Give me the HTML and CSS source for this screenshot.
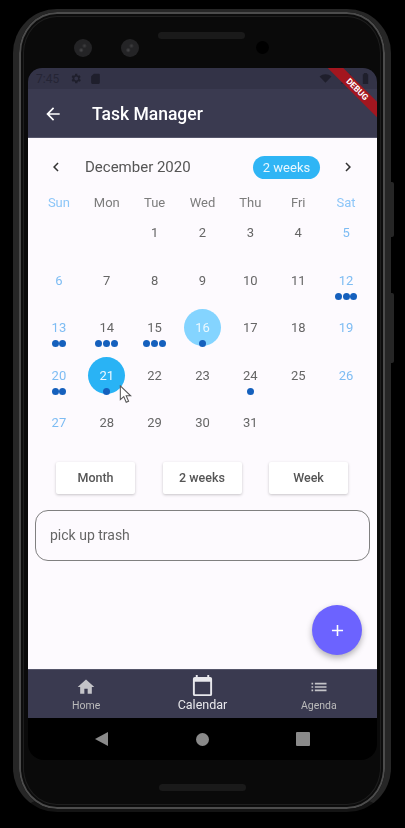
FILE: index.html
```html
<!DOCTYPE html>
<html lang="en">

<head>
    <meta charset="UTF-8">
    <meta name="viewport" content="width=device-width, initial-scale=1.0">
    <title>Task Manager</title>
    <link rel="stylesheet" href="styles.css">
</head>

<body>
    <div class="phone">
        <div class="side-btn side-btn-top"></div>
        <div class="side-btn side-btn-low"></div>

        <div class="bezel-top">
            <div class="sensors">
                <span class="lens"></span>
                <span class="lens"></span>
                <span class="speaker"></span>
                <span class="camera"></span>
            </div>
        </div>

        <div class="screen">
            <div class="status-bar">
                <span class="clock">7:45</span>
                <svg class="status-icon" viewBox="0 0 24 24"><path d="M19.4 13a7.800 7.800 0 0 0 0-2l2.100-1.600-2-3.400-2.500 1a7.500 7.500 0 0 0-1.700-1L15.400 3.300h-4l-.4 2.700a7.500 7.500 0 0 0-1.700 1l-2.500-1-2 3.400L6.900 11a7.800 7.800 0 0 0 0 2l-2.100 1.600 2 3.400 2.500-1a7.500 7.500 0 0 0 1.700 1l.4 2.700h4l.4-2.700a7.500 7.500 0 0 0 1.700-1l2.500 1 2-3.400zM13.400 15.500a3.500 3.500 0 1 1 0-7 3.500 3.500 0 0 1 0 7z"/></svg>
                <svg class="status-icon" viewBox="0 0 24 24"><path d="M9 3h9a2 2 0 0 1 2 2v15a2 2 0 0 1-2 2H6a2 2 0 0 1-2-2V8z"/></svg>
                <span class="status-fill"></span>
                <svg class="status-icon" viewBox="0 0 24 24"><path d="M12 20 1 8.500a16 16 0 0 1 22 0z"/></svg>
                <svg class="status-icon" viewBox="0 0 24 24"><path d="M21 3v18H3z"/></svg>
                <svg class="status-icon" viewBox="0 0 24 24"><path d="M9 2h6v2h2v18H7V4h2z"/></svg>
            </div>

            <header class="app-bar">
                <svg class="back-icon" viewBox="0 0 24 24"><path d="M20 11H7.800l5.600-5.600L12 4l-8 8 8 8 1.400-1.400L7.800 13H20z"/></svg>
                <h1 class="app-title">Task Manager</h1>
            </header>

            <div class="debug-banner"><span>DEBUG</span></div>

            <main class="content">
                <div class="cal-header">
                    <svg class="chevron" viewBox="0 0 24 24"><path d="M15.400 7.400 14 6l-6 6 6 6 1.400-1.400L10.800 12z"/></svg>
                    <span class="cal-title">December 2020</span>
                    <span class="format-pill">2 weeks</span>
                    <svg class="chevron" viewBox="0 0 24 24"><path d="M10 6 8.600 7.400 13.200 12l-4.600 4.600L10 18l6-6z"/></svg>
                </div>

                <div class="week-head">
                    <span class="weekend">Sun</span>
                    <span>Mon</span>
                    <span>Tue</span>
                    <span>Wed</span>
                    <span>Thu</span>
                    <span>Fri</span>
                    <span class="weekend">Sat</span>
                </div>

                <div class="days" id="days"></div>

                <div class="format-buttons">
                    <button class="format-btn">Month</button>
                    <button class="format-btn">2 weeks</button>
                    <button class="format-btn">Week</button>
                </div>

                <div class="task-box">pick up trash</div>

                <button class="fab">
                    <svg viewBox="0 0 24 24"><path d="M19 13h-6v6h-2v-6H5v-2h6V5h2v6h6z"/></svg>
                </button>

                <svg class="cursor" viewBox="0 0 14 22"><path d="M1 1v16l4-3.500 2.800 6.500 2.800-1.200-2.800-6.300H13z"/></svg>
            </main>

            <nav class="bottom-nav">
                <div class="nav-item">
                    <svg class="nav-icon" viewBox="0 0 24 24"><path d="M10 20v-6h4v6h5v-8h3L12 3 2 12h3v8z"/></svg>
                    <span>Home</span>
                </div>
                <div class="nav-item nav-active">
                    <svg class="nav-icon" viewBox="0 0 24 24"><path d="M20 3h-1V1h-2v2H7V1H5v2H4a2 2 0 0 0-2 2v16a2 2 0 0 0 2 2h16a2 2 0 0 0 2-2V5a2 2 0 0 0-2-2zm0 18H4V8h16z"/></svg>
                    <span>Calendar</span>
                </div>
                <div class="nav-item">
                    <svg class="nav-icon" viewBox="0 0 24 24"><path d="M3 13h2v-2H3zm0 4h2v-2H3zm0-8h2V7H3zm4 4h14v-2H7zm0 4h14v-2H7zM7 7v2h14V7z"/></svg>
                    <span>Agenda</span>
                </div>
            </nav>

            <div class="system-nav">
                <span class="sys-back"></span>
                <span class="sys-home"></span>
                <span class="sys-recent"></span>
            </div>
        </div>

        <div class="bezel-bottom"><span class="speaker"></span></div>
    </div>

    <script>
        // day, number of dots, state; empty cells lead the first week
        const MARKERS = { 12: 3, 13: 2, 14: 3, 15: 3, 16: 1, 20: 2, 21: 1, 24: 1 };
        const FIRST_WEEKDAY = 2;
        const LAST_DAY = 31;

        const days = document.getElementById('days');

        for (let i = 0; i < FIRST_WEEKDAY; i++) {
            days.appendChild(document.createElement('div'));
        }

        for (let d = 1; d <= LAST_DAY; d++) {
            const cell = document.createElement('div');
            const weekday = (d + FIRST_WEEKDAY - 1) % 7;
            cell.className = 'day';
            if (weekday === 0 || weekday === 6) cell.classList.add('weekend');
            if (d === 16) cell.classList.add('today');
            if (d === 21) cell.classList.add('selected');

            const num = document.createElement('span');
            num.className = 'num';
            num.innerText = d;
            cell.appendChild(num);

            if (MARKERS[d]) {
                const dots = document.createElement('span');
                dots.className = 'dots';
                for (let k = 0; k < MARKERS[d]; k++) {
                    dots.appendChild(document.createElement('i'));
                }
                cell.appendChild(dots);
            }
            days.appendChild(cell);
        }
    </script>
</body>

</html>
```
FILE: styles.css
```css
* {
    box-sizing: border-box;
}

html,
body {
    margin: 0;
    height: 100%;
    background-color: #000;
    overflow: hidden;
}

body {
    padding: 9px 0 0 13px;
    font-family: Roboto, "Liberation Sans", sans-serif;
}

.phone {
    position: relative;
    display: flex;
    flex-direction: column;
    width: 378px;
    height: 803px;
    padding: 0 8px 0 9px;
    background-color: #0a0a0a;
    border-style: solid;
    border-width: 3px 6px;
    border-color: #262626 #262626 #141414;
    border-radius: 44px;
    box-shadow: inset 0 0 0 2px #4c4c4c, inset 0 0 0 4px #0c0c0c, inset 0 0 0 5px #1e1e1e;
    filter: blur(0.5px);
}

.side-btn {
    position: absolute;
    right: -9px;
    width: 3px;
    background-color: #262626;
    border-radius: 0 2px 2px 0;
}

.side-btn-top {
    top: 170px;
    height: 55px;
}

.side-btn-low {
    top: 281px;
    height: 70px;
}

.bezel-top {
    height: 56px;
    flex: none;
}

.sensors {
    position: relative;
    display: flex;
    align-items: center;
    gap: 29px;
    height: 100%;
    padding: 16px 0 0 46px;
}

.lens {
    width: 18px;
    height: 18px;
    border-radius: 50%;
    background:
        radial-gradient(circle at 40% 62%, #4a4a4c 0, transparent 2.500px),
        radial-gradient(circle at 58% 38%, #404042 0, transparent 2.500px),
        #242426;
}

.speaker {
    display: block;
    width: 87px;
    height: 7px;
    border-radius: 4px;
    background-color: #1a1a1a;
}

.sensors .speaker {
    position: absolute;
    left: 130px;
    top: 20px;
}

.camera {
    position: absolute;
    left: 228px;
    top: 29px;
    width: 13px;
    height: 13px;
    border-radius: 50%;
    background-color: #000;
}

.screen {
    position: relative;
    display: flex;
    flex-direction: column;
    width: 349px;
    height: 692px;
    flex: none;
    overflow: hidden;
    background-color: #000;
    border-radius: 14px 14px 16px 16px;
}

.status-bar {
    display: flex;
    align-items: center;
    gap: 7px;
    height: 21px;
    flex: none;
    padding: 0 5px 0 8px;
    background-color: #333347;
    color: #252535;
    font-size: 12px;
}

.clock {
    margin-right: 3px;
}

.status-icon {
    width: 13px;
    height: 13px;
    fill: #1f1f2c;
}

.status-fill {
    flex: 1;
}

.app-bar {
    display: flex;
    align-items: center;
    height: 49px;
    flex: none;
    padding: 2px 0 0 15px;
    background-color: #3a3a50;
    color: #fff;
    border-bottom: 1px solid #55556a;
}

.back-icon {
    width: 20px;
    height: 20px;
    fill: #fff;
}

.app-title {
    margin: 0 0 0 29px;
    font-size: 17.500px;
    font-weight: 500;
}

.debug-banner {
    position: absolute;
    top: 16px;
    right: -25px;
    width: 90px;
    height: 11px;
    transform: rotate(45deg);
    background-color: #a3161f;
    color: #fff;
    font-size: 8.500px;
    font-weight: 700;
    line-height: 11px;
    text-align: center;
}

.content {
    position: relative;
    flex: 1;
    padding: 0 7px;
    background-color: #fdfafe;
}

.cal-header {
    display: flex;
    align-items: center;
    height: 24px;
    margin-top: 17px;
    padding: 0 13px 0 12px;
    color: #444;
}

.chevron {
    width: 18px;
    height: 18px;
    fill: #333;
}

.cal-title {
    margin-left: 20px;
    font-size: 15px;
    color: #555;
}

.format-pill {
    width: 67px;
    height: 23px;
    margin: 0 19px 0 auto;
    border-radius: 12px;
    background-color: #2fb5f5;
    color: #e8f7ff;
    font-size: 13px;
    line-height: 23px;
    text-align: center;
}

.week-head {
    display: grid;
    grid-template-columns: repeat(7, 1fr);
    margin-top: 15px;
    height: 18px;
    color: #7c7c7c;
    font-size: 13px;
    line-height: 18px;
    text-align: center;
}

.weekend {
    color: #8cc6f8;
}

.days {
    display: grid;
    grid-template-columns: repeat(7, 1fr);
    grid-auto-rows: 47.5px;
    margin-top: -3px;
    min-height: 237.500px;
}

.day {
    position: relative;
    display: flex;
    align-items: center;
    justify-content: center;
    color: #666;
    font-size: 13px;
}

.day.weekend {
    color: #7dbcf3;
}

.day.today::before,
.day.selected::before {
    content: "";
    position: absolute;
    left: 50%;
    top: 50%;
    width: 37px;
    height: 37px;
    margin: -18.500px 0 0 -18.500px;
    border-radius: 50%;
}

.day.today::before {
    background-color: #84d4ff;
}

.day.selected::before {
    background-color: #29b3f5;
}

.day.today,
.day.selected {
    color: #eaf8ff;
}

.num {
    position: relative;
}

.dots {
    position: absolute;
    left: 0;
    right: 0;
    top: 36px;
    display: flex;
    justify-content: center;
    gap: 0.8px;
}

.dots i {
    width: 7px;
    height: 7px;
    border-radius: 50%;
    background-color: #1560bd;
}

.format-buttons {
    display: flex;
    justify-content: space-between;
    margin-top: 15px;
    padding: 0 22px 0 21px;
}

.format-btn {
    width: 79px;
    height: 32px;
    padding: 0;
    border: none;
    border-radius: 2px;
    background-color: #fff;
    box-shadow: 0 1px 3px rgba(0, 0, 0, 0.22);
    color: #555;
    font-family: inherit;
    font-size: 12.500px;
    font-weight: 500;
}

.task-box {
    height: 51px;
    margin-top: 16px;
    padding-left: 14px;
    border: 1px solid #808080;
    border-radius: 13px;
    color: #666;
    font-size: 14px;
    line-height: 48px;
}

.fab {
    position: absolute;
    right: 15px;
    bottom: 14px;
    display: flex;
    align-items: center;
    justify-content: center;
    width: 50px;
    height: 50px;
    padding: 0;
    border: none;
    border-radius: 50%;
    background-color: #6c63ff;
    box-shadow: 0 3px 6px rgba(0, 0, 0, 0.3);
}

.fab svg {
    width: 19px;
    height: 19px;
    fill: #fff;
}

.cursor {
    position: absolute;
    left: 91px;
    top: 247px;
    width: 13px;
    height: 19px;
    fill: #fff;
    stroke: #555;
    stroke-width: 1.2;
}

.bottom-nav {
    display: flex;
    justify-content: space-around;
    height: 49px;
    flex: none;
    padding-top: 7px;
    background-color: #3a3a50;
    color: #bbb;
    font-size: 10.500px;
    border-top: 1px solid #55556a;
}

.nav-item {
    display: flex;
    flex-direction: column;
    align-items: center;
    width: 116px;
}

.nav-icon {
    width: 20px;
    height: 20px;
    fill: #c4c4c8;
}

.nav-item span {
    margin-top: 2px;
}

.nav-active {
    margin-top: -3px;
    color: #e8e8ec;
    font-size: 12.500px;
}

.nav-active .nav-icon {
    width: 23px;
    height: 23px;
    fill: #e8e8ec;
}

.nav-active span {
    margin-top: 0;
}

.system-nav {
    display: flex;
    align-items: center;
    justify-content: space-between;
    height: 42px;
    flex: none;
    padding: 0 67px;
}

.sys-back {
    width: 0;
    height: 0;
    border-top: 7px solid transparent;
    border-bottom: 7px solid transparent;
    border-right: 13px solid #8a8a8a;
}

.sys-home {
    width: 13px;
    height: 13px;
    border-radius: 50%;
    background-color: #8a8a8a;
}

.sys-recent {
    width: 14px;
    height: 14px;
    border-radius: 1px;
    background-color: #8a8a8a;
}

.bezel-bottom {
    display: flex;
    justify-content: center;
    padding-top: 24px;
}
```
